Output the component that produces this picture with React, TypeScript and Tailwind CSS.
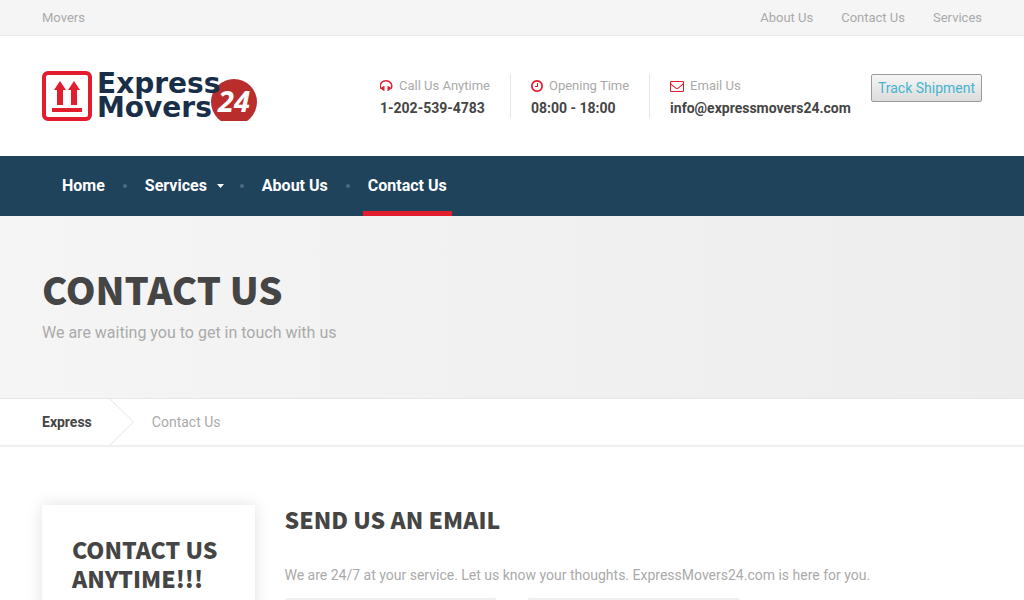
import React from "react";

const topLinks = ["About Us", "Contact Us", "Services"];

const navItems = [
  { label: "Home" },
  { label: "Services", hasMenu: true },
  { label: "About Us" },
  { label: "Contact Us", active: true },
];

const HeadphonesIcon = () => (
  <svg viewBox="64 0 1664 1792" className="h-[14px] w-[13px] fill-current" aria-hidden="true">
    <path d="M1664 886q0 166-60 314l-20 49-185 33q-22 83-90.500 136.500t-156.500 53.500v32q0 14-9 23t-23 9h-64q-14 0-23-9t-9-23v-576q0-14 9-23t23-9h64q14 0 23 9t9 23v32q71 0 130 35.500t93 95.500l68-12q29-95 29-193 0-148-88-279t-236.500-209-315.500-78-315.500 78-236.500 209-88 279q0 98 29 193l68 12q34-60 93-95.500t130-35.500v-32q0-14 9-23t23-9h64q14 0 23 9t9 23v576q0 14-9 23t-23 9h-64q-14 0-23-9t-9-23v-32q-88 0-156.500-53.500t-90.500-136.500l-185-33-20-49q-60-148-60-314 0-151 67-291t179-242.500 266-163.500 320-61 320 61 266 163.500 179 242.500 67 291z" />
  </svg>
);

const ClockIcon = () => (
  <svg viewBox="128 0 1536 1792" className="h-[14px] w-[12px] fill-current" aria-hidden="true">
    <path d="M1024 544v448q0 14-9 23t-23 9h-320q-14 0-23-9t-9-23v-64q0-14 9-23t23-9h224v-352q0-14 9-23t23-9h64q14 0 23 9t9 23zm416 352q0-148-73-273t-198-198-273-73-273 73-198 198-73 273 73 273 198 198 273 73 273-73 198-198 73-273zm224 0q0 209-103 385.500t-279.500 279.500-385.500 103-385.500-103-279.500-279.500-103-385.500 103-385.500 279.500-279.500 385.500-103 385.500 103 279.500 279.500 103 385.500z" />
  </svg>
);

const EnvelopeIcon = () => (
  <svg viewBox="0 0 1792 1792" className="h-[14px] w-[14px] fill-current" aria-hidden="true">
    <path d="M1664 1504v-768q-32 36-69 66-268 206-426 338-51 43-83 67t-86.500 48.500-102.500 24.500h-2q-48 0-102.500-24.500t-86.500-48.500-83-67q-158-132-426-338-37-30-69-66v768q0 13 9.500 22.500t22.500 9.500h1472q13 0 22.500-9.500t9.500-22.500zm0-1051v-24.500l-.5-13-3-12.500-5.500-9-9-7.500-14-2.500h-1472q-13 0-22.500 9.500t-9.500 22.500q0 168 147 284 193 152 401 317 6 5 35 29.500t46 37.500 44.500 31.500 50.500 27.500 43 9h2q20 0 43-9t50.500-27.500 44.500-31.500 46-37.500 35-29.500q208-165 401-317 54-43 100.500-115.500t46.500-131.500zm128-37v1088q0 66-47 113t-113 47h-1472q-66 0-113-47t-47-113v-1088q0-66 47-113t113-47h1472q66 0 113 47t47 113z" />
  </svg>
);

const contacts = [
  { icon: <HeadphonesIcon />, label: "Call Us Anytime", value: "1-202-539-4783" },
  { icon: <ClockIcon />, label: "Opening Time", value: "08:00 - 18:00" },
  { icon: <EnvelopeIcon />, label: "Email Us", value: "info@expressmovers24.com" },
];

const Logo = () => (
  <svg width="216" height="50" viewBox="0 0 216 50" role="img" aria-label="Express Movers 24">
    <rect x="2" y="2" width="46" height="46" rx="4" fill="#fff" stroke="#e11d2e" strokeWidth="4" />
    <path
      d="M18 10l6 9h-3v15h-6V19h-3zM32 10l6 9h-3v15h-6V19h-3zM10 37h30v4H10z"
      fill="#e11d2e"
    />
    <circle cx="192" cy="31" r="23" fill="#b92d2d" />
    <g fill="#182e49" fontFamily="DejaVu Sans, sans-serif" fontWeight="700" fontSize="28">
      <text x="55" y="22">Express</text>
      <text x="55" y="46">Movers</text>
    </g>
    <text
      x="176"
      y="41"
      fill="#fff"
      fontFamily="Open Sans, sans-serif"
      fontWeight="700"
      fontStyle="italic"
      fontSize="29"
    >
      24
    </text>
  </svg>
);

const Container = ({ className = "", children }: { className?: string; children: React.ReactNode }) => (
  <div className={`mx-auto w-full max-w-[940px] ${className}`}>{children}</div>
);

const fieldClass =
  "h-[50px] w-full rounded-[3px] border-2 border-[#eeeeee] bg-white px-4 text-sm text-[#454545] outline-none placeholder:text-[#aaaaaa]";

const App = () => {
  return (
    <div className="min-h-screen bg-white font-['Roboto',sans-serif] text-sm text-[#aaaaaa]">
      <div className="border-b border-[#e8e8e8] bg-[#f5f5f5] text-[13px] leading-[35px]">
        <Container className="flex justify-between">
          <span>Movers</span>
          <nav className="flex gap-7">
            {topLinks.map((link) => (
              <a key={link} href="#">
                {link}
              </a>
            ))}
          </nav>
        </Container>
      </div>

      <header>
        <Container className="flex items-start justify-between py-[35px]">
          <a href="#">
            <Logo />
          </a>
          <div className="flex items-start pt-[3px]">
            {contacts.map((contact) => (
              <div
                key={contact.label}
                className="border-r border-[#e5e5e5] px-5 last-of-type:border-r-0"
              >
                <div className="flex items-center gap-[6px] text-[13px] leading-6">
                  <span className="text-[#e11d2e]">{contact.icon}</span>
                  {contact.label}
                </div>
                <div className="leading-5 font-bold text-[#454545]">{contact.value}</div>
              </div>
            ))}
            <button
              type="button"
              className="h-7 rounded-[2px] border border-[#9a9a9a] bg-linear-to-b from-[#f6f6f6] to-[#dcdcdc] px-[6px] text-[#45b5cd]"
            >
              Track Shipment
            </button>
          </div>
        </Container>
      </header>

      <nav className="bg-[#20435c]">
        <Container>
          <ul className="flex items-center px-[15px] text-base font-bold text-white">
            {navItems.map((item, index) => (
              <li key={item.label} className="flex items-center">
                {index > 0 && <span className="mx-[13px] h-1 w-1 rounded-full bg-[#4d6980]" />}
                <a
                  href="#"
                  className={
                    item.active
                      ? "flex h-[60px] items-center border-y-[5px] border-t-transparent border-b-[#e11d2e] px-[5px]"
                      : "flex h-[60px] items-center px-[5px]"
                  }
                >
                  {item.label}
                  {item.hasMenu && (
                    <svg width="7" height="4" viewBox="0 0 7 4" className="ml-[10px] -mr-0.5 fill-white" aria-hidden="true">
                      <path d="M0 0h7L3.500 4z" />
                    </svg>
                  )}
                </a>
              </li>
            ))}
          </ul>
        </Container>
      </nav>

      <section className="border-b border-[#e5e5e5] bg-linear-to-r from-[#f5f5f5] to-[#ededed]">
        <Container className="pt-12 pb-[53px]">
          <h1 className="font-['Noto_Sans_CJK_SC',sans-serif] text-[38px] leading-[50px] font-black text-[#454545]">
            CONTACT US
          </h1>
          <p className="pt-[7px] text-base">We are waiting you to get in touch with us</p>
        </Container>
      </section>

      <nav className="border-b-2 border-[#f0f0f0]">
        <Container className="flex h-[46px] items-center">
          <a href="#" className="font-bold text-[#454545]">
            Express
          </a>
          <svg width="24" height="46" viewBox="0 0 24 46" className="mr-[18px] ml-[18px]" aria-hidden="true">
            <path d="M0 0l23.500 23L0 46" fill="none" stroke="#e5e5e5" />
          </svg>
          <span>Contact Us</span>
        </Container>
      </nav>

      <main>
        <Container className="grid grid-cols-4 gap-[30px] pt-[58px] pb-[60px]">
          <aside className="bg-white p-[30px] shadow-[0_0_15px_rgba(0,0,0,0.12)]">
            <h2 className="font-['Noto_Sans_CJK_SC',sans-serif] text-[23px] leading-[29px] font-black text-[#454545]">
              CONTACT US ANYTIME!!!
            </h2>
          </aside>
          <div className="col-span-3">
            <h2 className="font-['Noto_Sans_CJK_SC',sans-serif] text-[23px] leading-[29px] font-black text-[#454545]">
              SEND US AN EMAIL
            </h2>
            <p className="pt-[31px]">
              We are 24/7 at your service. Let us know your thoughts. ExpressMovers24.com is here for you.
            </p>
            <form className="grid grid-cols-3 gap-[30px] pt-[13px]">
              <input type="text" aria-label="Name" placeholder="Name" className={fieldClass} />
              <input type="email" aria-label="Email" placeholder="Email" className={fieldClass} />
            </form>
          </div>
        </Container>
      </main>
    </div>
  );
};

export default App;
